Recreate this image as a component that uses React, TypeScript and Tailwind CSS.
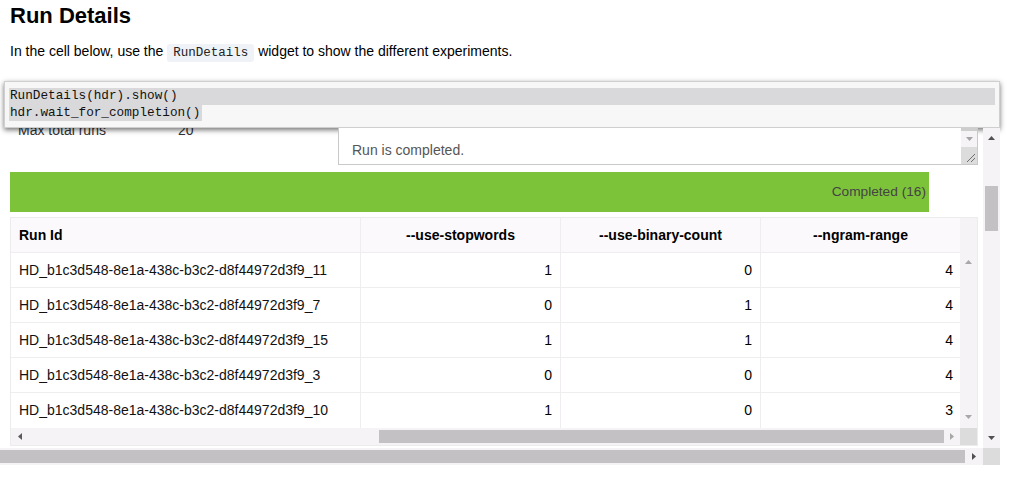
type Dir = "up" | "down" | "left" | "right";

const rows: [string, number, number, number][] = [
  ["HD_b1c3d548-8e1a-438c-b3c2-d8f44972d3f9_11", 1, 0, 4],
  ["HD_b1c3d548-8e1a-438c-b3c2-d8f44972d3f9_7", 0, 1, 4],
  ["HD_b1c3d548-8e1a-438c-b3c2-d8f44972d3f9_15", 1, 1, 4],
  ["HD_b1c3d548-8e1a-438c-b3c2-d8f44972d3f9_3", 0, 0, 4],
  ["HD_b1c3d548-8e1a-438c-b3c2-d8f44972d3f9_10", 1, 0, 3],
];

function Tri({ dir, color }: { dir: Dir; color: string }) {
  const vertical = dir === "up" || dir === "down";
  const pts = {
    up: "0,4 3.5,0 7,4",
    down: "0,0 7,0 3.5,4",
    left: "4,0 4,7 0,3.5",
    right: "0,0 4,3.5 0,7",
  }[dir];
  return (
    <svg
      width={vertical ? 7 : 4}
      height={vertical ? 4 : 7}
      viewBox={vertical ? "0 0 7 4" : "0 0 4 7"}
      className="block"
    >
      <polygon points={pts} fill={color} />
    </svg>
  );
}

export default function App() {
  return (
    <div className="h-[479px] w-[1010px] overflow-hidden bg-white text-black font-['Liberation_Sans',Arial,sans-serif]">
      <h1 className="pl-[10px] pt-[3px] text-[22px] font-bold leading-[26px]">Run Details</h1>
      <p className="mt-[12px] h-[20px] pl-[10px] text-[14px] leading-[20px]">
        In the cell below, use the{" "}
        <code className="rounded-[3px] bg-[#eff2f6] px-[6px] py-[2px] font-['Liberation_Mono',monospace] text-[12.5px] leading-[14px] text-[#222]">
          RunDetails
        </code>{" "}
        widget to show the different experiments.
      </p>

      {/* code cell */}
      <div className="relative z-10 ml-[4px] mt-[20px] h-[47px] w-[996px] border border-[#cfcfcf] bg-[#f7f7f7] px-[4px] pt-[6px] font-['Liberation_Mono',monospace] text-[12.7px] leading-[16.5px] text-[#111] shadow-[0_2px_5px_rgba(0,0,0,0.55)]">
        <div className="bg-[#d9d9db] pl-[1px]">RunDetails(hdr).show()</div>
        <div className="w-fit bg-[#d9d9db] pl-[1px] pr-[2px]">hdr.wait_for_completion()</div>
      </div>

      {/* output area */}
      <div className="flex h-[320px] w-[1000px]">
        <div className="relative w-[983px] overflow-hidden">
          <div className="-mt-[23px] flex h-[60px]">
            <div className="flex w-[328px] pl-[18px] pt-[15px] text-[14px] leading-[20px] text-[#333]">
              <span className="w-[160px]">Max total runs</span>
              <span>20</span>
            </div>
            <div className="relative z-20 ml-[10px] flex h-[60px] w-[640px] border border-[#c9c9c9] bg-white">
              <div className="flex-1 pl-[13px] pt-[34px] text-[14px] leading-[20px] text-[#555]">
                Run is completed.
              </div>
              <div className="flex w-[16px] flex-col">
                <div className="h-[25px] bg-[#cdcdcd]" />
                <div className="flex h-[16px] items-center justify-center bg-[#f5f3f5]">
                  <Tri dir="down" color="#a3a3a3" />
                </div>
                <div className="relative h-[17px] bg-[#dcdcdc]">
                  <svg width="10" height="10" viewBox="0 0 10 10" className="absolute bottom-[1px] right-[1px]">
                    <path d="M9 1 L1 9 M9 5 L5 9" stroke="#6f6f6f" strokeWidth="1" fill="none" />
                  </svg>
                </div>
              </div>
            </div>
          </div>

          {/* progress bar */}
          <div className="ml-[10px] mt-[7px] flex h-[40px] w-[919px] justify-end bg-[#7cc33a] pr-[3px] pt-[12px] text-[13.7px] leading-[16px] text-[#444]">
            Completed (16)
          </div>

          {/* runs table */}
          <div className="ml-[10px] mt-[5px] w-[968px] border border-[#ececec] text-[14px] text-black">
            <div className="flex">
              <div className="w-[949px]">
                <div className="flex h-[35px] border-b border-[#efedef] bg-[#fcf9fc] font-bold">
                  <div className="flex w-[350px] items-center border-r border-[#efedef] pl-[8px]">Run Id</div>
                  <div className="flex w-[200px] items-center justify-center border-r border-[#efedef]">--use-stopwords</div>
                  <div className="flex w-[200px] items-center justify-center border-r border-[#efedef]">--use-binary-count</div>
                  <div className="flex w-[199px] items-center justify-center">--ngram-range</div>
                </div>
                {rows.map((r, i) => (
                  <div
                    key={r[0]}
                    className={i < rows.length - 1 ? "flex h-[35px] border-b border-[#efedef]" : "flex h-[35px]"}
                  >
                    <div className="flex w-[350px] items-center border-r border-[#efedef] pl-[8px] text-[#111]">{r[0]}</div>
                    <div className="flex w-[200px] items-center justify-end border-r border-[#efedef] pr-[8px]">{r[1]}</div>
                    <div className="flex w-[200px] items-center justify-end border-r border-[#efedef] pr-[8px]">{r[2]}</div>
                    <div className="flex w-[199px] items-center justify-end pr-[7px]">{r[3]}</div>
                  </div>
                ))}
              </div>
              <div className="flex w-[17px] flex-col items-center bg-[#f5f3f5]">
                <div className="h-[35px]" />
                <div className="pt-[7px]">
                  <Tri dir="up" color="#a8a8a8" />
                </div>
                <div className="flex-1" />
                <div className="pb-[9px]">
                  <Tri dir="down" color="#a8a8a8" />
                </div>
              </div>
            </div>
            <div className="flex h-[17px]">
              <div className="flex w-[949px] bg-[#f5f3f5]">
                <div className="flex w-[17px] items-center justify-center">
                  <Tri dir="left" color="#5a5a5a" />
                </div>
                <div className="ml-[351px] mt-[2px] h-[13px] w-[565px] bg-[#c3c1c4]" />
                <div className="flex flex-1 items-center justify-center">
                  <Tri dir="right" color="#a8a8a8" />
                </div>
              </div>
              <div className="w-[17px] bg-[#dcdcdc]" />
            </div>
          </div>
        </div>

        {/* outer vertical scrollbar */}
        <div className="relative z-20 flex w-[17px] flex-col items-center bg-[#f5f3f5]">
          <div className="h-[17px] pt-[8px]">
            <Tri dir="up" color="#505050" />
          </div>
          <div className="mt-[41px] h-[45px] w-[13px] bg-[#c3c1c4]" />
          <div className="flex-1" />
          <div className="pb-[8px]">
            <Tri dir="down" color="#505050" />
          </div>
        </div>
      </div>

      {/* outer horizontal scrollbar */}
      <div className="flex h-[17px] w-[1000px]">
        <div className="flex w-[983px] bg-[#f5f3f5]">
          <div className="mt-[2px] h-[13px] w-[965px] bg-[#c3c1c4]" />
          <div className="flex flex-1 items-center justify-center">
            <Tri dir="right" color="#505050" />
          </div>
        </div>
        <div className="w-[17px] bg-[#dcdcdc]" />
      </div>
    </div>
  );
}
